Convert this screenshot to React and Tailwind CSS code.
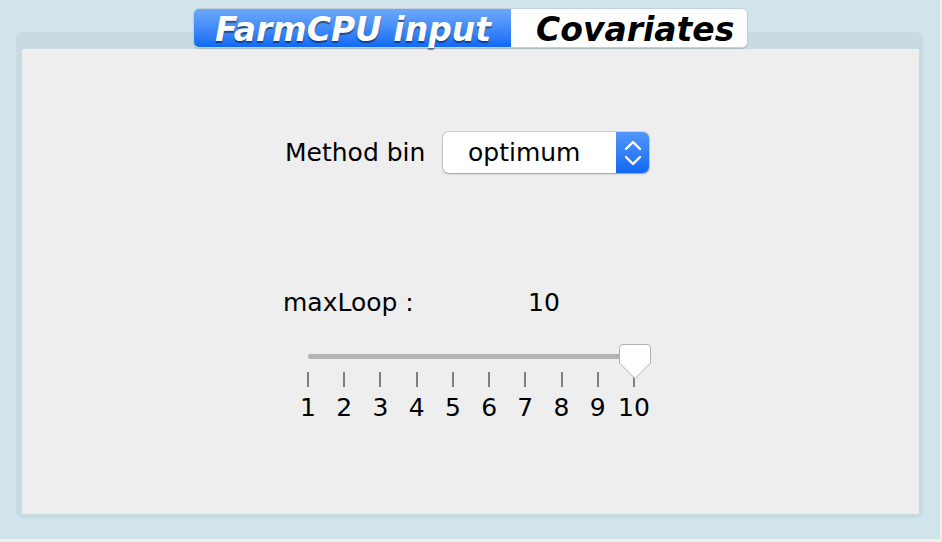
import React from 'react'

const ticks = [1, 2, 3, 4, 5, 6, 7, 8, 9, 10]

function Tabs() {
  return (
    <div className="absolute left-[193px] top-[8px] flex h-[40px] w-[555px] rounded-[6px] border border-[#c4cfd6] shadow-[0_1px_1px_rgba(0,0,0,0.15)] font-['DejaVu_Sans',sans-serif] text-[33px] font-bold italic leading-[34px]">
      <div className="w-[317px] rounded-l-[5px] pl-[21px] pt-[4px] bg-gradient-to-b from-[#6ca9fa] to-[#0e6af5] text-white [text-shadow:0_2px_1px_rgba(0,0,0,0.45)]">
        FarmCPU input
      </div>
      <div className="flex-1 rounded-r-[5px] pl-[25px] pt-[4px] bg-white text-black">
        Covariates
      </div>
    </div>
  )
}

function Select() {
  return (
    <div className="flex h-[41px] w-[206px] rounded-[6px] bg-white shadow-[0_0_0_1px_rgba(0,0,0,0.12),0_1px_2px_rgba(0,0,0,0.25)]">
      <div className="flex flex-1 items-center pl-[25px] text-[25px] text-black">optimum</div>
      <div className="flex w-[33px] items-center justify-center rounded-r-[6px] bg-gradient-to-b from-[#5096fa] to-[#0f67f4]">
        <svg width="20" height="30" viewBox="0 0 20 30" fill="none" stroke="white" strokeWidth="2.4" strokeLinecap="round" strokeLinejoin="round">
          <polyline points="3,11 10,4 17,11" />
          <polyline points="3,19 10,26 17,19" />
        </svg>
      </div>
    </div>
  )
}

function Slider() {
  return (
    <div className="relative ml-[285px] mt-[22px] w-[350px] pt-[14px]">
      <div className="ml-[1px] h-[5px] w-[322px] rounded-full bg-[#b3b3b3]" />
      <div className="mt-[13px] flex w-[328px] justify-between">
        {ticks.map(t => (
          <div key={t} className="h-[15px] w-[2px] bg-[#7f7f7f]" />
        ))}
      </div>
      <div className="mt-[7px] flex w-[328px] justify-between text-[25px] leading-[28px] text-black">
        {ticks.map(t => (
          <div key={t} className="flex w-[2px] justify-center whitespace-nowrap">{t}</div>
        ))}
      </div>
      {/* thumb */}
      <svg className="absolute left-[311px] top-[3px]" width="34" height="37" viewBox="0 0 34 37">
        <path d="M5 1.5 H29 A3.5 3.5 0 0 1 32.5 5 V20 L17 35.5 L1.5 20 V5 A3.5 3.5 0 0 1 5 1.5 Z" fill="white" stroke="#b0b0b0" strokeWidth="1" />
      </svg>
    </div>
  )
}

export default function App() {
  return (
    <div className="h-[542px] w-[942px] bg-[#eeeeee] font-['DejaVu_Sans',sans-serif]">
      <div className="relative h-[539px] w-[940px] bg-[#d1e4ec] pl-[16px] pt-[32px]">
        <div className="h-[486px] w-[907px] rounded-[7px] bg-[#c8dbe3] pb-[4px] pl-[6px] pr-[4px] pt-[17px]">
          <div className="h-full w-full bg-[#eeeeee] pt-[83px]">
            <div className="ml-[263px] flex h-[41px] items-center">
              <div className="w-[158px] text-[25px] text-black">Method bin</div>
              <Select />
            </div>
            <div className="ml-[261px] mt-[115px] flex h-[30px] items-center text-[25px] text-black">
              <div className="w-[245px]">maxLoop :</div>
              <div>10</div>
            </div>
            <Slider />
          </div>
        </div>
        <Tabs />
      </div>
    </div>
  )
}
